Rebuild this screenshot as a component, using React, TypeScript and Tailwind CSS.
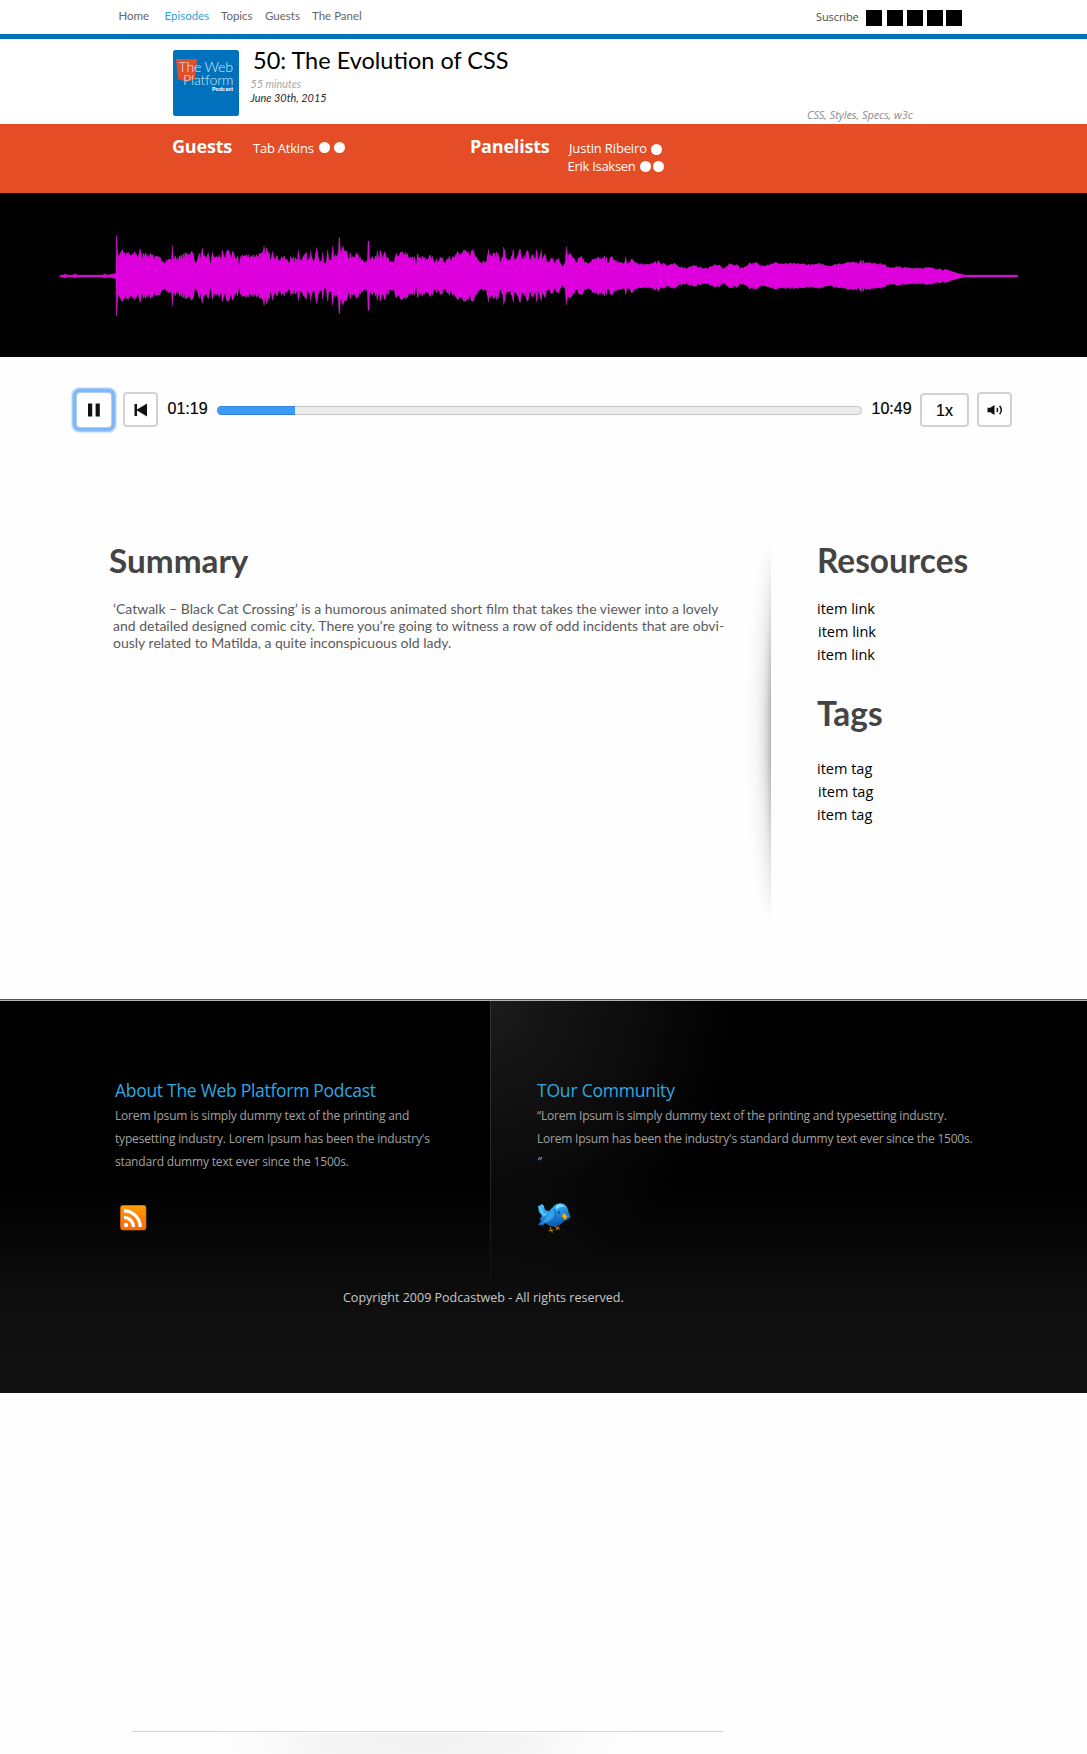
import React from "react";

const nav = [
  { label: "Home", cls: "w-[46px]" },
  { label: "Episodes", cls: "w-[56.5px] text-[#2fa4dc]" },
  { label: "Topics", cls: "w-[44px]" },
  { label: "Guests", cls: "w-[47px]" },
  { label: "The Panel", cls: "w-[60px]" },
];

// Waveform peaks as [x, half height] pairs.
const peaks: number[][] = (() => {
  const a = [228,3,229,41,231,41,232,28,235,19,240,23,247,26,255,20,265,23,275,19,285,24,293,19,300,26,305,19,318,24,325,18,333,23,345,18,360,17,375,15,388,16,394,16,397,29,400,18,420,18,435,21,445,22,458,25,463,15,467,11,475,22,480,19,488,26,492,19,500,16,505,22,512,12,518,22,530,17,537,21,542,16,547,25,555,19,565,25,572,18,580,26,584,19,590,15,594,19,597,11,602,20,620,20,640,20,660,21,667,21,672,28,675,22,679,27,690,19,694,19,697,27,702,20,712,18,720,17,728,19,735,17,745,14,749,14,752,22,756,16,765,16,772,17,775,27,779,17,790,19,797,23,803,16,809,19,812,28,817,17,825,17,830,27,838,14,845,14,848,23,852,13,858,13,863,26,867,15,874,15,878,29,882,17,890,20,895,22,897,36,899,36,902,25,908,29,913,24,919,23,925,18,932,22,937,17,945,18,950,23,958,17,975,14,982,15,984,33,987,33,988,16,1000,18,1008,18,1012,27,1016,18,1020,25,1025,20,1035,22,1045,18,1050,14,1060,14,1068,20,1074,20,1078,18];
  const b = [0,22,10,24,22,22,30,18,46,17,49,10,52,23,56,17,70,18,80,15,83,15,90,19,100,18,105,13,115,17,135,15,143,17,148,21,152,15,158,22,165,20,172,23,180,21,195,24,208,22,220,26,225,20,235,18,243,13,252,15,262,18,266,25,270,20,282,21,295,22,300,15,305,18,309,17,311,28,314,28,316,16,330,17,336,18,340,26,344,14,352,18,361,26,365,16,375,19,383,25,388,18,392,14,398,24,405,18,410,26,414,15,420,18,424,24,428,17,436,23,440,14,448,14,454,19,462,13,470,16,478,15,488,9,495,13,499,31,503,22,520,19,530,15,540,20,548,18,555,14,568,13,575,16,590,16,598,19,604,15,612,18,625,15,637,18,650,14,660,13,674,13,677,19,681,12,697,15,715,12,735,11,745,12,760,13,775,15,783,12,792,13,800,10,825,12,840,9,860,8,880,10,895,9,915,7,930,9,945,11,957,10];
  const c = [0,10,10,7,30,12,40,11,50,11,60,8,77,9,88,13,100,12,110,13,120,10,140,11,165,13,190,12,240,12,280,11,300,12,330,10,355,12,380,13,400,14,425,14.5,440,13,465,13,495,11,502,8,530,9,555,8,630,8,660,7,690,5,710,3,735,1,893,1];
  const out: number[][] = [[60, 1], [63, 1], [65, 2], [68, 1], [72, 1], [75, 2], [78, 1], [102, 1], [105, 2], [108, 1], [113, 2]];
  const add = (list: number[], origin: number) => {
    for (let i = 0; i < list.length; i += 2) out.push([origin + list[i] / 3, list[i + 1]]);
  };
  add(a, 40);
  add(b, 400);
  add(c, 720);
  return out;
})();

function wavePath() {
  const top: string[] = [];
  const bottom: string[] = [];
  let seg = 0;
  let seed = 7;
  let r = 0;
  for (let i = 180; i <= 3053; i += 1) {
    const x = i / 3;
    while (seg < peaks.length - 2 && peaks[seg + 1][0] < x) seg++;
    const [x0, h0] = peaks[seg];
    const [x1, h1] = peaks[seg + 1];
    let h = h0 + ((h1 - h0) * (x - x0)) / (x1 - x0 || 1);
    if (i % 3 === 0) {
      seed = (seed * 16807) % 2147483647;
      r = seed / 2147483647 - 0.5;
    }
    if (h > 5) h += r * (h > 14 ? 5 : 1.8);
    top.push(`${x.toFixed(2)} ${(83 - h).toFixed(1)}`);
    bottom.unshift(`${x.toFixed(2)} ${(83 + h * 0.98).toFixed(1)}`);
  }
  return `M${top.join("L")}L${bottom.join("L")}Z`;
}

const Dot = ({ className = "" }: { className?: string }) => (
  <span className={`block size-[11px] shrink-0 rounded-full bg-white ${className}`} />
);

function Logo() {
  return (
    <svg className="ml-[173px] mt-[11px] h-[66px] w-[66px] shrink-0" viewBox="0 0 66 66">
      <rect width="66" height="66" rx="2.5" fill="#0071bc" />
      <path d="M3 9H24L22 29L13.500 32L5 29Z" fill="#e44d26" />
      <g fill="#d9e9f5" fontFamily="Lato, sans-serif">
        <text x="5.500" y="21.800" fontSize="14.200" fontWeight="300" textLength="54.500">The Web</text>
        <text x="10" y="35.300" fontSize="14.200" fontWeight="300" textLength="50.500">Platform</text>
        <text x="39" y="41" fontSize="5.600" fontWeight="900" fill="#fff" textLength="21">Podcast</text>
      </g>
    </svg>
  );
}

function Rss() {
  return (
    <svg className="ml-[120px] mt-8 h-[26px] w-[27px]" viewBox="0 0 27 26">
      <defs>
        <linearGradient id="rss" x1="0" y1="0" x2="0" y2="1">
          <stop offset="0" stopColor="#ff9d0c" />
          <stop offset="1" stopColor="#f9690a" />
        </linearGradient>
      </defs>
      <rect x="0.500" y="0.300" width="25.500" height="24.700" rx="2.500" fill="url(#rss)" stroke="#d9730f" strokeWidth="0.600" />
      <circle cx="6" cy="20" r="2.200" fill="#fff" />
      <path d="M4 12.500A9.500 9.500 0 0 1 13.500 22M4 5.800A16.200 16.200 0 0 1 20.200 22" fill="none" stroke="#fff" strokeWidth="3.200" />
    </svg>
  );
}

function Bird() {
  return (
    <svg className="ml-[45px] mt-[28px] h-[34px] w-[35px]" viewBox="0 0 35 34">
      <defs>
        <linearGradient id="bird" x1="0" y1="0" x2="0.300" y2="1">
          <stop offset="0" stopColor="#5fd0fb" />
          <stop offset="0.450" stopColor="#2597e6" />
          <stop offset="1" stopColor="#0c5cb0" />
        </linearGradient>
      </defs>
      <path d="M2 5L4 4.500L6 3L8 5L9 9L13 10L18 5C22 0.500 29 2 31 6C32.500 9 32 12 34.500 15C34 18 31 19 28 20C25 24 19 27 14 25L9 22L7 24.500L4 24L2 24L5 20L4 18L6 15L3 11Z" fill="url(#bird)" />
      <path d="M3 6.500L6 5.500L8 12L12 12L8 16L4 11Z" fill="#4cc6fa" />
      <path d="M18 9C19.500 15 16 20 8 22L5 23C10 20 9 13 18 9Z" fill="#36a2ec" />
      <path d="M18 8C21 14 20 20 13 24" fill="none" stroke="#0f62b4" strokeWidth="0.700" />
      <path d="M20 5C23 2.500 27 3 29 6C26 5 22 6 20 9Z" fill="#8adcff" />
      <circle cx="22.800" cy="11.500" r="0.900" fill="#082a55" />
      <path d="M25.500 15L28 12L31.500 15.500L29 19Z" fill="#f4a812" />
      <path d="M14 26L15 29L12.500 30M15 29L16.500 31.500M15 29L17.500 29M19 25L21 27.500L20 29M21 27.500L24 28M21 27.500L23 25.500" fill="none" stroke="#b87a10" strokeWidth="1.100" />
    </svg>
  );
}

const items = ["", "ml-px", ""];

export default function App() {
  return (
    <div className="h-[1754px] w-[1087px] overflow-hidden bg-[#fefefe] font-[Lato,sans-serif]">
      <header className="flex h-[39px] items-start border-b-[5px] border-[#0071bc] bg-white">
        <nav className="flex w-[816px] shrink-0 pl-[118.5px] text-[11.5px] leading-[31px] text-[#666]">
          {nav.map((n) => (
            <a key={n.label} className={`whitespace-nowrap ${n.cls}`}>{n.label}</a>
          ))}
        </nav>
        <span className="mt-px w-[50px] shrink-0 font-['Open_Sans',sans-serif] text-[11px] leading-[31px] tracking-[-0.1px] text-[#4c4c4c]">Suscribe</span>
        <div className="mt-2.5 flex">
          <span className="mr-[5px] size-4 bg-black" />
          <span className="mr-1 size-4 bg-black" />
          <span className="mr-1 size-4 bg-black" />
          <span className="mr-[3px] size-4 bg-black" />
          <span className="size-4 bg-black" />
        </div>
      </header>

      <section className="flex h-[85px] bg-white">
        <Logo />
        <div className="ml-[11.5px] mt-[7px] w-[556.5px]">
          <h1 className="ml-[2.5px] text-[23.5px] leading-7 text-black">50: The Evolution of CSS</h1>
          <p className="mt-[3px] text-[10.8px] italic leading-[14px] text-[#a8a8a8]">55 minutes</p>
          <p className="text-[10.9px] italic leading-[14px] text-[#2a2a2a]">June 30th, 2015</p>
        </div>
        <p className="mt-[69px] whitespace-nowrap font-['Open_Sans',sans-serif] text-[11px] italic leading-[14px] tracking-[-0.08px] text-[#8c8c8c]">CSS, Styles, Specs, w3c</p>
      </section>

      <section className="flex h-[69px] items-start whitespace-nowrap bg-[#e44d26] font-['Open_Sans',sans-serif] text-[13px] leading-[18px] text-white">
        <h2 className="ml-[172px] mt-2.5 w-[81px] text-lg font-bold leading-6 tracking-[-0.2px]">Guests</h2>
        <div className="mt-[15px] flex w-[218px]">
          <span className="w-[66px] tracking-[-0.22px]">Tab Atkins</span>
          <Dot className="mt-[3px]" />
          <Dot className="ml-1 mt-[3px]" />
        </div>
        <h2 className="-ml-px mt-2.5 w-[98px] text-lg font-bold leading-6 tracking-[-0.2px]">Panelists</h2>
        <div className="mt-[15px]">
          <div className="flex">
            <span className="ml-[1px] w-[82px] tracking-[-0.15px]">Justin Ribeiro</span>
            <Dot className="mt-[5px]" />
          </div>
          <div className="flex">
            <span className="-ml-[0.5px] w-[72.5px] tracking-[-0.28px]">Erik Isaksen</span>
            <Dot className="mt-1" />
            <Dot className="ml-[2px] mt-1" />
          </div>
        </div>
      </section>

      <section className="h-[164px] bg-black">
        <svg className="block h-[164px] w-[1087px]" viewBox="0 0 1087 164">
          <path d={wavePath()} fill="#dd00dd" stroke="#c94fc9" strokeWidth="0.3" />
        </svg>
      </section>

      <section className="mt-[30px] flex h-[45px] items-center font-['Liberation_Sans',sans-serif] text-base text-black">
        <button className="ml-[76px] flex size-9 items-center justify-center rounded border border-[#b5cde8] bg-white shadow-[0_0_2px_3.5px_#7db8f7]">
          <svg className="h-3.5 w-3.5" viewBox="0 0 14 14">
            <path d="M1 0.500H5.200V13.500H1ZM8.600 0.500H12.800V13.500H8.600Z" fill="#111" />
          </svg>
        </button>
        <button className="ml-[11px] flex size-[35px] items-center justify-center rounded border-2 border-[#d2d2d2] bg-white">
          <svg className="h-3.5 w-3.5" viewBox="0 0 14 14">
            <path d="M0.500 1H3V6.500L13 0.500V13.500L3 7.500V13H0.500Z" fill="#111" />
          </svg>
        </button>
        <span className="mb-[2px] ml-[9.5px] w-[49.5px] [-webkit-text-stroke:0.2px]">01:19</span>
        <div className="mt-px flex h-[9px] w-[645px] rounded-full border border-[#c4c4c4] bg-[#ececec]">
          <div className="-ml-px -mt-px h-[9px] w-[78px] rounded-l-full border-y border-[#3583e0] bg-[#3c9afb]" />
        </div>
        <span className="mb-[2px] ml-[9.5px] w-[48.5px] [-webkit-text-stroke:0.2px]">10:49</span>
        <button className="mt-px flex h-[34px] w-[49px] items-center justify-center rounded border-2 border-[#d2d2d2] bg-white pt-px [-webkit-text-stroke:0.2px]">1x</button>
        <button className="ml-2 flex size-[35px] items-center justify-center rounded border-2 border-[#d2d2d2] bg-white">
          <svg className="h-3 w-4" viewBox="0 0 16 12">
            <path d="M0.500 3.800H3.200L7.500 1V11L3.200 8.200H0.500Z" fill="#111" />
            <path d="M9.800 4Q11.400 6 9.800 8M12.600 1.800Q16 6 12.600 10.200" fill="none" stroke="#111" strokeWidth="1.400" />
          </svg>
        </button>
      </section>

      <main className="mt-[108px] flex h-[459px] items-start">
        <article className="ml-[109px] w-[635px] text-[#444]">
          <h2 className="text-[33.3px] font-bold leading-10">Summary</h2>
          <p className="ml-1 mt-5 whitespace-nowrap text-[14px] leading-[17.2px] text-[#5a5a5a]">
            ‘Catwalk – Black Cat Crossing’ is a humorous animated short film that takes the viewer into a lovely
            <br />
            and detailed designed comic city. There you're going to witness a row of odd incidents that are obvi-
            <br />
            ously related to Matilda, a quite inconspicuous old lady.
          </p>
        </article>
        <div className="h-[385px] w-[27px] bg-[linear-gradient(to_left,#b4b4b4,#d2d2d2_12%,#e4e4e4_28%,#f2f2f2_55%,#fefefe)] [mask-image:radial-gradient(ellipse_30px_190px_at_100%_50%,#000_20%,transparent_100%)]" />
        <aside className="ml-[46px] text-[14.5px] leading-[23px] text-black">
          <h2 className="text-[33.4px] font-bold leading-10 text-[#444]">Resources</h2>
          <ul className="mt-[17px] font-['Open_Sans',sans-serif]">
            {items.map((c, i) => <li key={i} className={c}>item link</li>)}
          </ul>
          <h2 className="mt-[27px] text-[33.4px] font-bold leading-10 text-[#444]">Tags</h2>
          <ul className="mt-6 font-['Open_Sans',sans-serif]">
            {items.map((c, i) => <li key={i} className={c}>item tag</li>)}
          </ul>
        </aside>
      </main>

      <footer className="h-[394px] border-t border-[#555] bg-black font-['Open_Sans',sans-serif]">
        <div className="h-px bg-[#b5b5b5]" />
        <div className="h-[392px] bg-[linear-gradient(to_bottom,#000_0%,#000_45%,#101010_82%,#111_100%)]">
          <div className="flex h-[287px] text-[12px] leading-[23px] text-[#a2a2a2]">
            <section className="w-[490px] pt-[77px]">
              <h3 className="ml-[115px] text-[17.5px] leading-6 tracking-[-0.29px] text-[#2fa8e0]">About The Web Platform Podcast</h3>
              <p className="ml-[115px] mt-0.5 whitespace-nowrap tracking-[-0.18px]">
                Lorem Ipsum is simply dummy text of the printing and
                <br />
                typesetting industry. Lorem Ipsum has been the industry's
                <br />
                standard dummy text ever since the 1500s.
              </p>
              <Rss />
            </section>
            <div className="h-[300px] w-px shrink-0 bg-[linear-gradient(to_bottom,#333,#2a2a2a_50%,#0d0d0d)]" />
            <section className="h-[287px] w-[596px] bg-[radial-gradient(ellipse_250px_280px_at_0_0,#1b1b1b,transparent)] pt-[77px]">
              <h3 className="ml-[46px] text-[17.5px] leading-6 tracking-[-0.2px] text-[#2fa8e0]">TOur Community</h3>
              <p className="ml-[46px] mt-0.5 whitespace-nowrap tracking-[-0.21px]">
                “Lorem Ipsum is simply dummy text of the printing and typesetting industry.
                <br />
                Lorem Ipsum has been the industry's standard dummy text ever since the 1500s.
                <br />
                <i>”</i>
              </p>
              <Bird />
            </section>
          </div>
          <p className="ml-[343px] text-[12.5px] leading-5 text-[#c8c8c8]">Copyright 2009 Podcastweb - All rights reserved.</p>
        </div>
      </footer>

      <div className="ml-[132px] mt-[338px] h-px w-[591px] bg-[#d4d4d4]" />
      <div className="ml-[132px] mt-px h-[22px] w-[591px] bg-[radial-gradient(ellipse_210px_80px_at_49%_0,#f2f2f2,#f4f4f4_40%,#fefefe)]" />
    </div>
  );
}
